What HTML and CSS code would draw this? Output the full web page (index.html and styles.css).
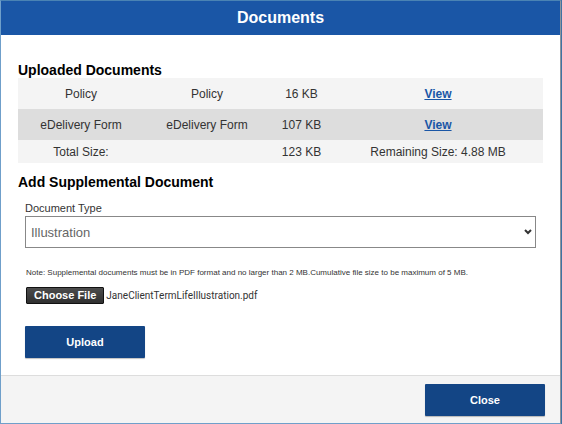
FILE: index.html
```html
<!DOCTYPE html>
<html lang="en">
<head>
<meta charset="utf-8">
<title>Documents</title>
<link rel="stylesheet" href="styles.css">
</head>
<body>
<main class="dialog">
  <header class="dialog-header"><h1>Documents</h1></header>
  <div class="dialog-body">
    <h2>Uploaded Documents</h2>
    <table class="documents">
      <colgroup><col class="col-name"><col class="col-type"><col class="col-size"><col class="col-action"></colgroup>
      <tbody>
        <tr><td>Policy</td><td>Policy</td><td>16 KB</td><td><a href="#">View</a></td></tr>
        <tr><td>eDelivery Form</td><td>eDelivery Form</td><td>107 KB</td><td><a href="#">View</a></td></tr>
      </tbody>
      <tfoot>
        <tr><td>Total Size:</td><td></td><td>123 KB</td><td>Remaining Size: 4.88 MB</td></tr>
      </tfoot>
    </table>
    <h2>Add Supplemental Document</h2>
    <form class="upload-form">
      <label class="field-label" for="doc-type">Document Type</label>
      <div class="select-wrap">
        <select id="doc-type"><option>Illustration</option></select>
        <svg class="chevron" viewBox="0 0 8 6" aria-hidden="true"><path d="M1 1l3 3 3-3"/></svg>
      </div>
      <p class="note">Note: Supplemental documents must be in PDF format and no larger than 2 MB.Cumulative file size to be maximum of 5 MB.</p>
      <div class="file-row">
        <input class="file-input" type="file" id="doc-file" accept="application/pdf">
        <label class="file-button" for="doc-file">Choose File</label>
        <span class="file-name">JaneClientTermLifeIllustration.pdf</span>
      </div>
      <button class="button" type="button">Upload</button>
    </form>
  </div>
  <footer class="dialog-footer"><button class="button" type="button">Close</button></footer>
</main>
</body>
</html>
```
FILE: styles.css
```css
* { box-sizing: border-box; }

body {
  margin: 0;
  background: #3f73a3;
  color: #333;
  font-family: "Liberation Sans", Arial, sans-serif;
  font-size: 12px;
  line-height: 16px;
}

.dialog {
  display: flex;
  flex-direction: column;
  min-height: 100vh;
  margin-right: 1px;
  background: #fff;
  border: 1px solid #6f9fca;
  border-top-color: #4a83b4;
  border-right-color: #8e969e;
}

.dialog-header {
  padding: 7px 0;
  background: #1a56a6;
  color: #fff;
  text-align: center;
}

h1, h2 { margin: 0; }
h1 { font-size: 16px; line-height: 20px; }
h2 { color: #000; font-size: 14px; line-height: 16px; }

.dialog-body {
  flex: 1;
  padding: 27px 17px 16px;
}

.documents {
  width: 100%;
  margin-bottom: 11px;
  border-collapse: collapse;
  table-layout: fixed;
  background: #f4f4f4;
  text-align: center;
}

.col-name, .col-type { width: 24%; }
.col-size { width: 12%; }
.col-action { width: 40%; }

.documents td { height: 31px; padding: 0; }
.documents tbody tr:nth-child(2) { background: #ddd; }
.documents tfoot td { height: 23px; }
.documents a { color: #1a56a6; font-weight: bold; }

.upload-form { padding: 10px 7px 0; }

.field-label {
  display: block;
  font-size: 11px;
}

.select-wrap { position: relative; }

select {
  display: block;
  width: 100%;
  height: 32px;
  padding: 0 5px;
  appearance: none;
  border: 1px solid #888;
  border-radius: 0;
  background: #fff;
  color: #666;
  font: 13px "Liberation Sans", Arial, sans-serif;
}

.chevron {
  position: absolute;
  top: 13px;
  right: 4px;
  width: 8px;
  height: 6px;
  fill: none;
  stroke: #333;
  stroke-width: 2;
  pointer-events: none;
}

.note {
  margin: 19px 1px 8px;
  font-size: 8px;
  line-height: 12px;
}

.file-row {
  display: flex;
  align-items: center;
  gap: 2px;
  margin: 0 1px 22px;
}

.file-name { font: 10px/16px Roboto, sans-serif; }

.file-input {
  position: absolute;
  width: 1px;
  height: 1px;
  opacity: 0;
}

.file-button {
  padding: 0 7px;
  border: 1px solid #111;
  border-radius: 1px;
  background: linear-gradient(#4c4c4c, #303030);
  color: #fff;
  font-size: 11px;
  font-weight: bold;
  line-height: 15px;
}

.button {
  width: 120px;
  height: 32px;
  padding: 0;
  border: 0;
  border-radius: 1px;
  background: #134585;
  box-shadow: 0 1px 1px rgba(0, 0, 0, 0.25);
  color: #fff;
  font: bold 11px "Liberation Sans", Arial, sans-serif;
}

.upload-form .button { display: block; }

.dialog-footer {
  display: flex;
  justify-content: flex-end;
  padding: 8px 15px 7px;
  border-top: 1px solid #ddd;
  background: #f4f4f4;
}
```
